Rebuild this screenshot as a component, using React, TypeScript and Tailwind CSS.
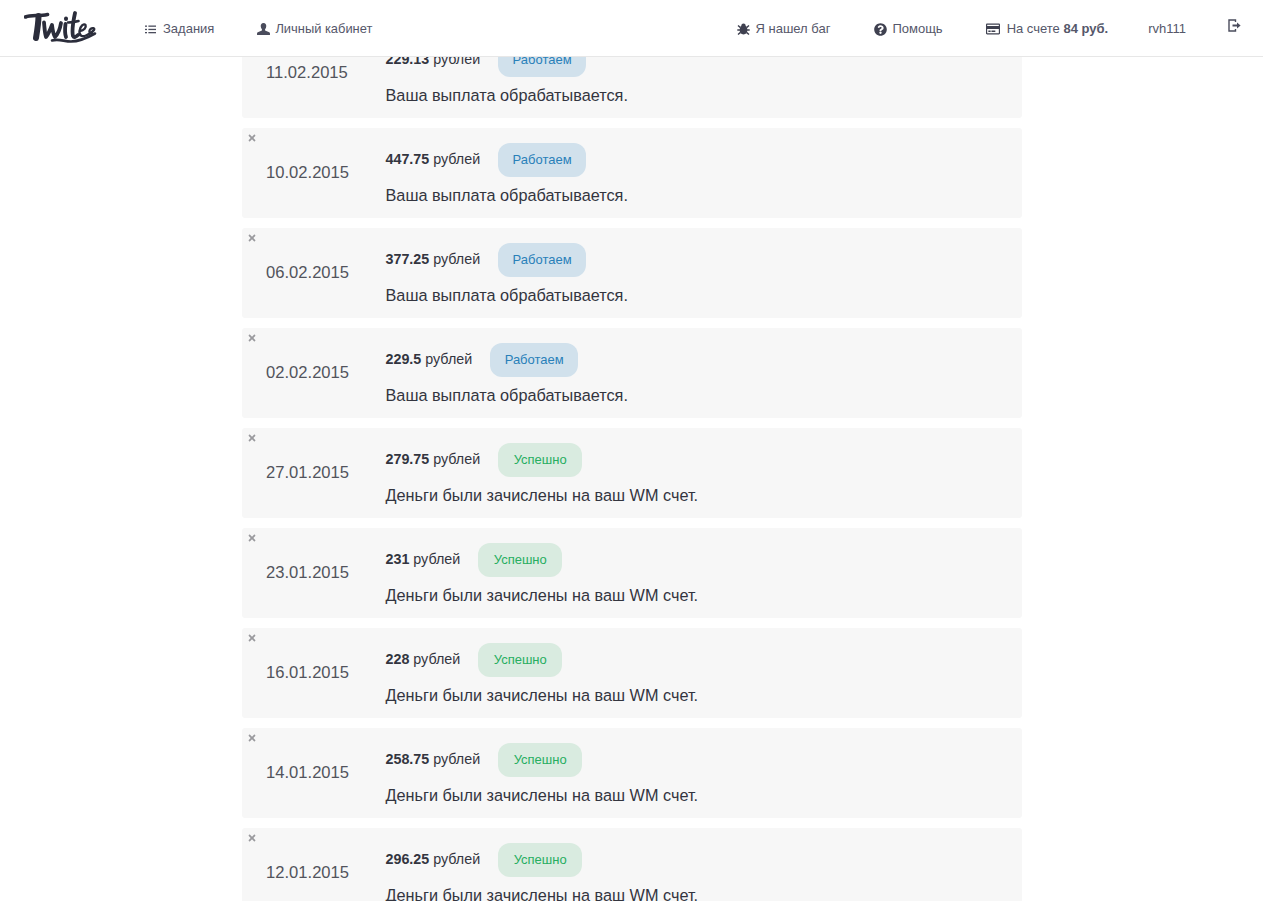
import React from "react";
import { FaQuestionCircle, FaRegCreditCard, FaTimes } from "react-icons/fa";

const sans = "[font-family:'Liberation_Sans',Arial,sans-serif]";

type Row = { date: string; amount: string; ok: boolean };
const rows: Row[] = [
  { date: "11.02.2015", amount: "229.13", ok: false },
  { date: "10.02.2015", amount: "447.75", ok: false },
  { date: "06.02.2015", amount: "377.25", ok: false },
  { date: "02.02.2015", amount: "229.5", ok: false },
  { date: "27.01.2015", amount: "279.75", ok: true },
  { date: "23.01.2015", amount: "231", ok: true },
  { date: "16.01.2015", amount: "228", ok: true },
  { date: "14.01.2015", amount: "258.75", ok: true },
  { date: "12.01.2015", amount: "296.25", ok: true },
];

function Logo() {
  return (
    <svg width="74" height="34" viewBox="0 0 74 34" fill="none" stroke="#2b2d3b" strokeLinecap="round" strokeLinejoin="round">
      <path d="M1.5 6C7 3.5 15 5.5 23.5 3.5" strokeWidth="3.6" />
      <path d="M14.5 5C14.5 12 13 21 12 27" strokeWidth="6" />
      <path d="M20 11.5C20.5 16 20.5 21 22 26C24.5 23 26.5 18 28 14C28.5 18 29 23 31 26C34 23 36 18 37 12" strokeWidth="3.8" />
      <path d="M41.5 13C41 17 40.5 22 42 26" strokeWidth="3.8" />
      <path d="M42 7.5V8" strokeWidth="4" />
      <path d="M51 2C49.5 9 47.5 19 49 25C50 27 52 26 54 24" strokeWidth="3.8" />
      <path d="M44 11.5C47.5 11.5 51 11 54.5 10" strokeWidth="2.6" />
      <path d="M56 20C60 19.5 62.5 16.5 61.5 14C60 12 56 15 55.5 20C55 25 58.5 26 62 24.5C65.5 23 68.5 21 70 19C71 17 68.5 16.5 66.5 18C64.5 20 65 22.5 68 22" strokeWidth="2.4" />
      <path d="M28 29.5C35 27.5 40 30.5 47 30.5C55 30.5 63 27 71 22.5" strokeWidth="2.6" />
    </svg>
  );
}

function ListIcon() {
  return (
    <svg width="11" height="9" viewBox="0 0 11 9" fill="#4a4c5c">
      <rect x="0" y="0.5" width="2" height="1.3" />
      <rect x="3.4" y="0.5" width="7.6" height="1.3" />
      <rect x="0" y="3.8" width="2" height="1.3" />
      <rect x="3.4" y="3.8" width="7.6" height="1.3" />
      <rect x="0" y="7" width="2" height="1.3" />
      <rect x="3.4" y="7" width="7.6" height="1.3" />
    </svg>
  );
}

function UserIcon() {
  return (
    <svg width="13" height="12" viewBox="0 0 14 13" fill="#4a4c5c">
      <path d="M7 0C4.9 0 3.9 1.6 4 3.6C4.1 5 4.6 6 5.3 6.8V8L0.8 10C0.2 10.3 0 10.8 0 11.4V13H14V11.4C14 10.8 13.8 10.3 13.2 10L8.7 8V6.8C9.4 6 9.9 5 10 3.6C10.1 1.6 9.1 0 7 0Z" />
    </svg>
  );
}

function BugIcon() {
  return (
    <svg width="13" height="13" viewBox="0 0 13 13" fill="#3f4150">
      <ellipse cx="6.5" cy="7" rx="3.8" ry="4.4" />
      <circle cx="6.5" cy="2.8" r="2.2" />
      <path d="M1 2.5L3.5 4.6M12 2.5L9.5 4.6M0.3 7H3M12.7 7H10M1 11.5L3.5 9.4M12 11.5L9.5 9.4" stroke="#3f4150" strokeWidth="1.4" />
    </svg>
  );
}

function LogoutIcon() {
  return (
    <svg width="13" height="13" viewBox="0 0 13 13" fill="none" stroke="#4a4c5c">
      <path d="M7.5 3V1H1V12H7.5V10" strokeWidth="1.4" />
      <path d="M4.5 6.5H9" strokeWidth="2" />
      <path d="M9 3.5L12.6 6.5L9 9.5Z" fill="#4a4c5c" stroke="none" />
    </svg>
  );
}

function Header() {
  return (
    <header className="absolute top-0 left-0 right-0 h-[57px] bg-white border-b border-[#e7e7e7] flex items-center text-[13px] text-[#55576a] pl-[24px] pt-[2px]">
      <div className="-mt-[2px]">
        <Logo />
      </div>
      <a className="ml-[47px] flex items-center gap-[7px]">
        <ListIcon />
        Задания
      </a>
      <a className="ml-[43px] flex items-center gap-[5px]">
        <UserIcon />
        <span className="text-[12.9px]">Личный кабинет</span>
      </a>
      <div className="ml-auto flex items-center">
        <a className="flex items-center gap-[5px]">
          <BugIcon />
          Я нашел баг
        </a>
        <a className="ml-[44px] flex items-center gap-[5px]">
          <FaQuestionCircle className="text-[#3f4150] text-[13px]" />
          Помощь
        </a>
        <a className="ml-[43px] flex items-center gap-[7px]">
          <FaRegCreditCard className="text-[#3f4150] text-[14px]" />
          <span>
            На счете <b className="font-bold">84 руб.</b>
          </span>
        </a>
        <a className="ml-[40px]">rvh111</a>
        <a className="ml-[42px] mr-[22px] -translate-y-[4px]">
          <LogoutIcon />
        </a>
      </div>
    </header>
  );
}

function PaymentRow({ row }: { row: Row }) {
  return (
    <div className="relative h-[90px] rounded-[3px] bg-[#f7f7f7] flex text-[#33353f]">
      <FaTimes className="absolute left-[5px] top-[5px] text-[10px] text-[#9a9a9e]" />
      <div className="w-[144px] pl-[24.5px] pt-[35px] text-[16.6px] leading-[20px] text-[#52545c]">{row.date}</div>
      <div className="pt-[15px]">
        <div className="flex items-center h-[34px] text-[14.3px]">
          <span>
            <b className="font-bold">{row.amount}</b> рублей
          </span>
          <span
            className={
              row.ok
                ? "ml-[18px] h-[34px] w-[84px] justify-center rounded-[12px] flex items-center text-[13px] bg-[#d9ebe0] text-[#27ae60]"
                : "ml-[18px] h-[34px] w-[88px] justify-center rounded-[12px] flex items-center text-[13px] bg-[#d1e1ec] text-[#2980b9]"
            }
          >
            {row.ok ? "Успешно" : "Работаем"}
          </span>
        </div>
        <div className="mt-[8px] text-[16.25px] leading-[20px]">
          {row.ok ? "Деньги были зачислены на ваш WM счет." : "Ваша выплата обрабатывается."}
        </div>
      </div>
    </div>
  );
}

export default function App() {
  return (
    <div className={`relative h-[901px] overflow-hidden bg-white ${sans}`}>
      <main className="w-[780px] mx-auto pt-[28px] flex flex-col gap-[10px]">
        {rows.map((r) => (
          <PaymentRow key={r.date} row={r} />
        ))}
      </main>
      <Header />
    </div>
  );
}
